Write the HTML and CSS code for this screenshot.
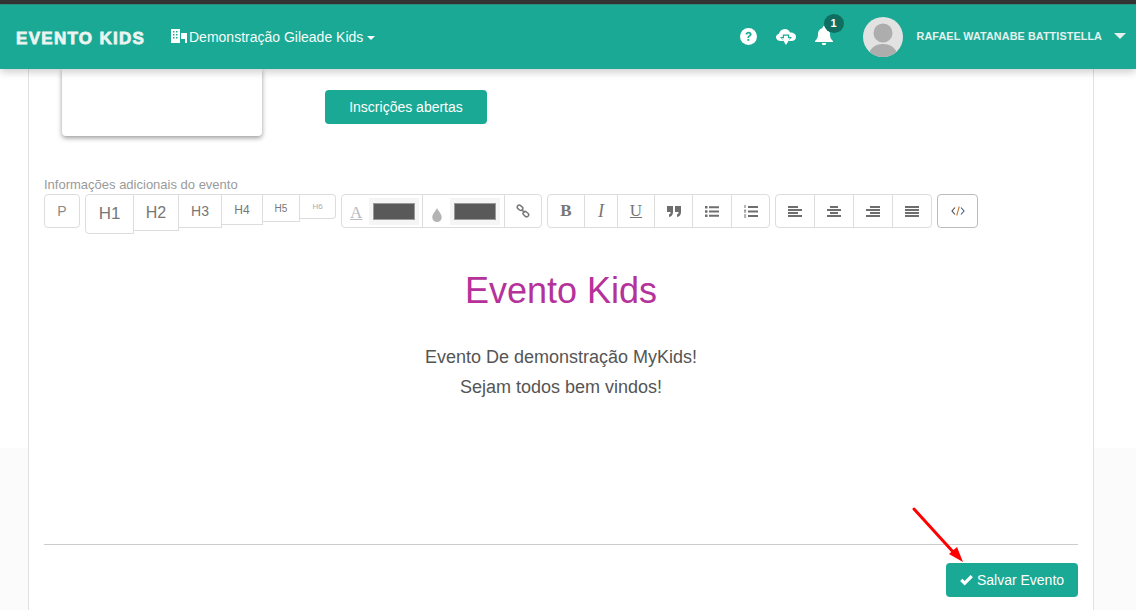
FILE: index.html
```html
<!DOCTYPE html>
<html lang="pt-BR">
<head>
<meta charset="utf-8">
<title>Evento Kids</title>
<link rel="stylesheet" href="styles.css">
</head>
<body>
<div class="topstrip"></div>
<header class="navbar">
  <div class="brand">EVENTO KIDS</div>
  <div class="org">
    <svg class="org-icon" viewBox="0 0 16 14" width="16" height="14"><path fill="#fff" d="M0 0h9v14H0zM10 4h6v10h-2v-4h-4z"/><path fill="#1aa994" d="M2 2h1.500v1.500H2zM5 2h1.500v1.500H5zM2 5h1.500v1.500H2zM5 5h1.500v1.500H5zM2 8h1.500v1.500H2zM5 8h1.500v1.500H5z"/></svg>
    <span>Demonstração Gileade Kids</span>
    <span class="caret small"></span>
  </div>
  <div class="nav-right">
    <svg class="nav-icon help" viewBox="0 0 16 16" width="17" height="17"><circle cx="8" cy="8" r="8" fill="#fff"/><path d="M5.300 6.200C5.400 4.500 6.600 3.600 8.100 3.600c1.600 0 2.800 1 2.800 2.300 0 1.200-.7 1.700-1.500 2.200-.6.400-.8.600-.8 1.200H7c0-1.200.5-1.700 1.200-2.200.6-.4 1-.6 1-1.100 0-.5-.5-.9-1.100-.9-.7 0-1.100.4-1.200 1.100z" fill="#1aa994"/><rect x="7" y="10.300" width="1.700" height="1.800" fill="#1aa994"/></svg>
    <svg class="nav-icon cloud" viewBox="0 0 20 16" width="20" height="16"><path fill="#fff" d="M5 12C2 12 0 10.500 0 8.200 0 6.300 1.300 5 3 4.700 3.500 2.200 5.700 0 8.800 0c2.600 0 4.600 1.500 5.300 3.600C17.400 3.500 20 5.300 20 8c0 2.500-2 4-4.600 4z"/><path fill="#1aa994" d="M6.800 5.500h6.400v2.500H16L10 14.500 4 8h2.800z"/><path fill="#fff" d="M8 6.700h4v2.500h2.200L10 16 5.800 9.200H8z"/></svg>
    <div class="bell-wrap">
      <svg class="nav-icon" viewBox="0 0 18 20" width="18" height="20"><path fill="#fff" d="M9 0c.8 0 1.300.6 1.300 1.300v.6C13 2.500 15 4.700 15 7.500c0 4 .8 5.500 3 7.500v1H0v-1c2.200-2 3-3.500 3-7.500 0-2.800 2-5 4.700-5.600v-.6C7.700.6 8.200 0 9 0zM6.800 17h4.400c0 1.300-1 2.300-2.200 2.300S6.800 18.300 6.800 17z"/></svg>
      <span class="badge">1</span>
    </div>
    <svg class="avatar" viewBox="0 0 40 40" width="40" height="40"><defs><clipPath id="avatar-clip"><circle cx="20" cy="20" r="20"/></clipPath></defs><circle cx="20" cy="20" r="20" fill="#e2e2e2"/><g clip-path="url(#avatar-clip)" fill="#adadad"><circle cx="20" cy="16" r="9.500"/><ellipse cx="20" cy="38" rx="14" ry="11"/></g></svg>
    <span class="username">RAFAEL WATANABE BATTISTELLA</span>
    <span class="caret user"></span>
  </div>
</header>
<main class="content">
  <section class="card">
    <div class="event-head">
      <div class="thumb"></div>
      <button class="btn status">Inscrições abertas</button>
    </div>
    <label class="field-label">Informações adicionais do evento</label>
    <div class="toolbar">
      <div class="tb-single p">P</div>
      <div class="tb-heads">
        <div class="h h1">H1</div>
        <div class="h h2">H2</div>
        <div class="h h3">H3</div>
        <div class="h h4">H4</div>
        <div class="h h5">H5</div>
        <div class="h h6">H6</div>
      </div>
      <div class="tb-group colors">
        <div class="tb-color c1">
          <span class="letter-a">A</span>
          <span class="swatch-wrap"><span class="swatch"></span></span>
        </div>
        <div class="tb-color c2">
          <svg class="drop" viewBox="0 0 12 16" width="12" height="15"><path fill="#b4b4b4" d="M6 0c1 3 5 6 5 10a5 5 0 0 1-10 0C1 6 5 3 6 0z"/></svg>
          <span class="swatch-wrap"><span class="swatch"></span></span>
        </div>
        <div class="tb-btn w37">
          <svg viewBox="0 0 14 14" width="14" height="14" fill="none" stroke="#777" stroke-width="1.500"><rect x="0.900" y="1.800" width="6" height="4" rx="2" transform="rotate(40 4 4)"/><rect x="7" y="8.200" width="6" height="4" rx="2" transform="rotate(40 10 10)"/><path d="M5.500 5.500l3 3"/></svg>
        </div>
      </div>
      <div class="tb-group">
        <div class="tb-btn w36 serif b">B</div>
        <div class="tb-btn w33 serif i">I</div>
        <div class="tb-btn w37 serif u">U</div>
        <div class="tb-btn w38">
          <svg viewBox="0 0 14 11" width="14" height="11"><path fill="#6e6e6e" d="M0 0h6v6c0 3-1.500 4.500-4 5V8.500C3 8 3.500 7.500 3.600 6H0zM8 0h6v6c0 3-1.500 4.500-4 5V8.500c1-.5 1.500-1 1.600-2.500H8z"/></svg>
        </div>
        <div class="tb-btn w39">
          <svg viewBox="0 0 14 11" width="14" height="11"><path fill="#6e6e6e" d="M0 0h2.500v2.500H0zM0 4.200h2.500v2.500H0zM0 8.400h2.500v2.500H0zM4 .3h10v2H4zM4 4.500h10v2H4zM4 8.700h10v2H4z"/></svg>
        </div>
        <div class="tb-btn w38">
          <svg viewBox="0 0 14 13" width="14" height="13"><path fill="#6e6e6e" d="M.5 0h1v3h-1zM0 4.800h2.200v1H0zM0 6.500h2.200v1H0zM0 9.500h2.200v1H0zM0 11.500h2.200v1H0zM4 1h10v2H4zM4 5.500h10v2H4zM4 10h10v2H4z"/></svg>
        </div>
      </div>
      <div class="tb-group">
        <div class="tb-btn w38"><svg viewBox="0 0 14 11" width="14" height="11"><path fill="#6e6e6e" d="M0 0h10v2H0zM0 3h14v2H0zM0 6h10v2H0zM0 9h14v2H0z"/></svg></div>
        <div class="tb-btn w39"><svg viewBox="0 0 14 11" width="14" height="11"><path fill="#6e6e6e" d="M3 0h8v2H3zM0 3h14v2H0zM3 6h8v2H3zM0 9h14v2H0z"/></svg></div>
        <div class="tb-btn w39"><svg viewBox="0 0 14 11" width="14" height="11"><path fill="#6e6e6e" d="M4 0h10v2H4zM0 3h14v2H0zM4 6h10v2H4zM0 9h14v2H0z"/></svg></div>
        <div class="tb-btn w39"><svg viewBox="0 0 14 11" width="14" height="11"><path fill="#6e6e6e" d="M0 0h14v2H0zM0 3h14v2H0zM0 6h14v2H0zM0 9h14v2H0z"/></svg></div>
      </div>
      <div class="tb-single code">
        <svg viewBox="0 0 14 10" width="14" height="10" fill="none" stroke-width="1.100"><path d="M4 1.500L1 5l3 3.500" stroke="#444"/><path d="M8.300.5L5.700 9.500" stroke="#c77d3a"/><path d="M10 1.500L13 5l-3 3.500" stroke="#3a5a8c"/></svg>
      </div>
    </div>
    <div class="editor">
      <h1 class="ed-title">Evento Kids</h1>
      <p class="ed-text">Evento De demonstração MyKids!</p>
      <p class="ed-text">Sejam todos bem vindos!</p>
    </div>
    <hr class="divider">
    <div class="actions">
      <button class="btn save">
        <svg viewBox="0 0 14 12" width="13" height="11"><path fill="#fff" d="M5 11.500L0 6.500 2.500 4 5 6.500 11.500 0 14 2.500z"/></svg>
        Salvar Evento
      </button>
    </div>
  </section>
</main>
<svg class="arrow" viewBox="0 0 60 60" width="60" height="60"><path d="M3 3L44 48" stroke="#f00" stroke-width="3" stroke-linecap="round" fill="none"/><path d="M52 56L38 48 46 41z" fill="#f00"/></svg>
</body>
</html>
```
FILE: styles.css
```css
* { box-sizing: border-box; }
html, body { height: 610px; overflow: hidden; }
body {
  margin: 0;
  position: relative;
  font-family: "Liberation Sans", Arial, sans-serif;
  background: linear-gradient(#fff 0, #fff 448px, #fbfbfb 448px);
  color: #555;
}
.topstrip { height: 4px; background: #353535; }
.navbar {
  position: relative;
  z-index: 2;
  height: 65px;
  background: #1aa994;
  display: flex;
  align-items: center;
  padding-left: 16px;
  color: #fff;
  box-shadow: 0 3px 8px rgba(0,0,0,.2);
  border-top: 1px solid #2a8d7d;
}
.brand {
  font-weight: 700;
  font-size: 17px;
  letter-spacing: 1.300px;
  width: 155px;
  color: #ecf4f1;
  -webkit-text-stroke: .8px #ecf4f1;
  transform: translateY(2px);
}
.org { display: flex; align-items: center; font-size: 14px; gap: 2px; color: #f4fbfa; }
.org-icon { margin-bottom: 3px; }
.caret { display: inline-block; width: 0; height: 0; border-left: 4px solid transparent; border-right: 4px solid transparent; border-top: 4px solid #fff; }
.caret.small { margin-left: 2px; margin-top: 2px; }
.nav-right { margin-left: auto; display: flex; align-items: center; padding-right: 10px; }
.nav-icon { display: block; }
.help { margin-right: 19px; margin-bottom: 2px; }
.cloud { margin-right: 19px; margin-bottom: 1px; }
.bell-wrap { position: relative; margin-right: 30px; margin-bottom: 2px; }
.badge {
  position: absolute;
  left: 9px;
  top: -12px;
  width: 20px;
  height: 19px;
  border-radius: 50%;
  background: #0f6e5f;
  color: #fff;
  font-size: 11px;
  font-weight: 700;
  line-height: 19px;
  text-align: center;
}
.avatar { display: block; margin-right: 14px; margin-bottom: 1px; }
.username { font-size: 10.800px; font-weight: 700; color: #e4f1ee; margin-right: 12px; margin-bottom: 3px; letter-spacing: .1px; }
.caret.user { border-left-width: 6px; border-right-width: 6px; border-top-width: 6px; border-top-color: #e4f1ee; margin-bottom: 2px; }
.content { padding: 0 42px 0 28px; }
.card {
  height: 541px;
  background: #fff;
  border-left: 1px solid #e2e2e2;
  border-right: 1px solid #e2e2e2;
  padding: 0 15px;
}
.event-head { display: flex; align-items: flex-start; height: 105px; padding-left: 18px; }
.thumb { width: 200px; height: 67px; background: #fff; border-radius: 0 0 4px 4px; box-shadow: 0 2px 5px rgba(0,0,0,.4); }
.btn { border: 0; border-radius: 4px; background: #1aa994; color: #fff; font-family: inherit; font-size: 14px; }
.status { width: 162px; height: 34px; margin: 21px 0 0 63px; }
.field-label { display: block; font-size: 13px; line-height: 14px; margin-top: 4px; color: #9a9a9a; height: 16px; }
.toolbar { display: flex; align-items: flex-start; gap: 5px; height: 40px; }
.tb-single, .tb-group, .tb-heads .h { background: #fff; border: 1px solid #ddd; }
.tb-single { display: flex; align-items: center; justify-content: center; height: 34px; border-radius: 4px; color: #8a8a8a; font-size: 14px; }
.p { width: 36px; }
.tb-heads { display: flex; align-items: flex-start; }
.h { display: flex; align-items: center; justify-content: center; color: #777; border-left: 0 !important; }
.h1 { width: 49px; height: 40px; font-size: 17px; border-left: 1px solid #ddd !important; border-radius: 4px 0 0 4px; }
.h2 { width: 45px; height: 37px; font-size: 16px; }
.h3 { width: 43px; height: 34px; font-size: 14px; }
.h4 { width: 41px; height: 31px; font-size: 12px; }
.h5 { width: 37px; height: 28px; font-size: 10px; }
.h6 { width: 36px; height: 25px; font-size: 8px; color: #aaa; border-radius: 0 4px 4px 0; }
.tb-group { display: flex; height: 34px; border-radius: 4px; }
.tb-btn { display: flex; align-items: center; justify-content: center; height: 32px; border-left: 1px solid #ddd; color: #777; }
.tb-group > :first-child { border-left: 0; }
.w33 { width: 33px; } .w36 { width: 36px; } .w37 { width: 37px; } .w38 { width: 38px; } .w39 { width: 39px; }
.serif { font-family: "Liberation Serif", serif; font-size: 17px; }
.b { font-weight: 700; }
.i { font-style: italic; font-size: 18px; }
.u { text-decoration: underline; }
.tb-color { display: flex; align-items: center; height: 32px; border-left: 1px solid #ddd; padding-left: 8px; gap: 7px; }
.c1 { width: 80px; border-left: 0; }
.c2 { width: 82px; }
.letter-a { font-family: "Liberation Serif", serif; font-size: 17px; color: #bbb; text-decoration: underline; padding-top: 4px; }
.drop { margin-top: 8px; }
.swatch-wrap { display: block; padding: 5px 4px; background: #f5f5f5; }
.swatch { display: block; width: 42px; height: 17px; background: #595959; border: 1px solid #999; }
.code { width: 41px; border-color: #bbb; }
.editor { height: 310px; text-align: center; color: #555; }
.ed-title { margin: 0 0 31px; padding-top: 37px; font-size: 36px; font-weight: 400; line-height: 40px; color: #b5329a; }
.ed-text { margin: 0; font-size: 18px; line-height: 30px; }
.divider { border: 0; border-top: 1px solid #ccc; margin: 0; }
.actions { display: flex; justify-content: flex-end; padding-top: 18px; }
.save { width: 132px; height: 34px; display: flex; align-items: center; justify-content: center; gap: 4px; }
.arrow { position: absolute; left: 911px; top: 506px; }
```
